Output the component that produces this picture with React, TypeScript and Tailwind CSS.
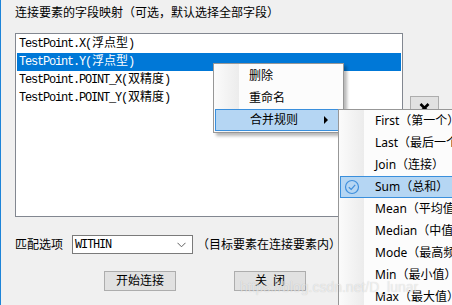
import React from "react";

const rows = [
  ["TestPoint.X(", "浮点型)"],
  ["TestPoint.Y(", "浮点型)"],
  ["TestPoint.POINT_X(", "双精度)"],
  ["TestPoint.POINT_Y(", "双精度)"],
];

const rules = [
  "First（第一个）",
  "Last（最后一个）",
  "Join（连接）",
  "Sum（总和）",
  "Mean（平均值）",
  "Median（中值）",
  "Mode（最高频）",
  "Min（最小值）",
  "Max（最大值）",
];

const ui = "font-['Noto_Sans','Noto_Sans_CJK_SC',sans-serif]";
const mono = "font-['Liberation_Mono','Noto_Sans_CJK_SC',monospace]";

/* ── Context menu (删除 / 重命名 / 合并规则) ───────────────────── */
function ContextMenu() {
  return (
    <div className="absolute left-[212px] top-[63px] w-[131px] border border-[#979797] bg-[#fcfcfc] py-[1px] shadow-[3px_3px_3px_rgba(0,0,0,0.28)]">
      <div className="absolute left-0 top-0 bottom-0 w-[25px] bg-gradient-to-r from-[#fbfbfb] to-[#ececec]" />
      <div className="relative flex h-[22px] items-center pl-[35px] text-[12px] text-black">删除</div>
      <div className="relative flex h-[22px] items-center pl-[35px] text-[12px] text-black">重命名</div>
      <div className="relative mx-[1px] flex h-[22px] items-center justify-between border border-[#3a8fdc] bg-[#b5d6f3] pl-[34px] pr-[13px] text-[12px] text-black">
        <span>合并规则</span>
        <span className="h-0 w-0 border-y-[4px] border-l-[4px] border-y-transparent border-l-black" />
      </div>
    </div>
  );
}

/* ── Sub menu with merge rules ──────────────────────────────────── */
function RuleMenu() {
  return (
    <div className="absolute left-[337px] top-[109px] w-[170px] border border-[#979797] bg-[#fcfcfc]">
      <div className="absolute left-0 top-0 bottom-0 w-[25px] bg-gradient-to-r from-[#fbfbfb] to-[#ececec]" />
      {rules.map((r) =>
        r.startsWith("Sum") ? (
          <div
            key={r}
            className="relative ml-[1px] flex h-[22px] items-center border border-[#3a8fdc] bg-[#b5d6f3] text-[12px] text-black"
          >
            <svg width="16" height="16" viewBox="0 0 16 16" className="ml-[3px]">
              <circle cx="8" cy="8" r="6.5" fill="none" stroke="#3f8fdc" strokeWidth="1.2" />
              <path d="M4.8 8.2 L7.2 10.4 L11.2 5.8" fill="none" stroke="#3f8fdc" strokeWidth="1.2" />
            </svg>
            <span className="ml-[15px]">{r}</span>
          </div>
        ) : (
          <div key={r} className="relative flex h-[22px] items-center pl-[36px] text-[12px] text-black">
            {r}
          </div>
        )
      )}
    </div>
  );
}

export default function App() {
  return (
    <div className={`relative h-[305px] w-[452px] overflow-hidden border-l border-[#1d84d8] bg-[#f0f0f0] ${ui}`}>
      {/* Title */}
      <div className="pl-[14px] pt-[5px] text-[12px] leading-[16px] text-black">
        连接要素的字段映射（可选，默认选择全部字段）
      </div>

      {/* Field list + delete button */}
      <div className="mt-[12px] flex pl-[14px]">
        <div className="h-[184px] w-[388px] border border-[#828790] bg-white py-[1px]">
          {rows.map(([a, b], i) => (
            <div
              key={a + i}
              className={`mx-[1px] flex h-[18px] items-center pl-[2px] text-[12px] ${mono} ${
                i === 1 ? "bg-[#0078d7] text-white" : "text-black"
              }`}
            >
              <span className="tracking-[-1.2px]">{a}</span>
              <span className="ml-[1px]">{b.slice(0, -1)}</span>
              <span className="tracking-[-1.2px]">)</span>
            </div>
          ))}
        </div>
        <div className="ml-[7px] mt-[63px] flex h-[23px] w-[29px] justify-center border border-[#adadad] bg-[#e1e1e1] pt-[6px]">
          <svg width="11" height="10" viewBox="0 0 11 10">
            <path d="M1.5 1 L9.5 9 M9.5 1 L1.5 9" stroke="#000" strokeWidth="2.6" />
          </svg>
        </div>
      </div>

      {/* Match option row */}
      <div className="mt-[18px] flex h-[19px] items-center pl-[14px] text-[12px] text-black">
        <span className="w-[57px]">匹配选项</span>
        <div className="flex h-[19px] w-[121px] items-center justify-between border border-[#7a7a7a] bg-white pl-[2px] pr-[6px]">
          <span className={`text-[12px] tracking-[-1.2px] ${mono}`}>WITHIN</span>
          <svg width="9" height="6" viewBox="0 0 9 6">
            <path d="M0.5 0.8 L4.5 4.8 L8.5 0.8" fill="none" stroke="#606060" strokeWidth="1" />
          </svg>
        </div>
        <span className="ml-[4px] whitespace-nowrap">（目标要素在连接要素内）</span>
      </div>

      {/* Buttons */}
      <div className="mt-[17px] flex pl-[103px] text-[12px] text-black">
        <button className="h-[20px] w-[72px] border border-[#adadad] bg-[#e1e1e1]">开始连接</button>
        <button className="ml-[58px] flex h-[20px] w-[72px] items-center justify-center gap-[6px] border border-[#adadad] bg-[#e1e1e1]">
          <span>关</span>
          <span>闭</span>
        </button>
      </div>

      <ContextMenu />
      <RuleMenu />

      {/* Watermark */}
      <div className="pointer-events-none absolute left-[239px] top-[277px] font-['Liberation_Sans',sans-serif] text-[14px] text-white/60 [text-shadow:0_0_1px_rgba(0,0,0,0.2)]">
        https://blog.csdn.net/D_lunar
      </div>
    </div>
  );
}
